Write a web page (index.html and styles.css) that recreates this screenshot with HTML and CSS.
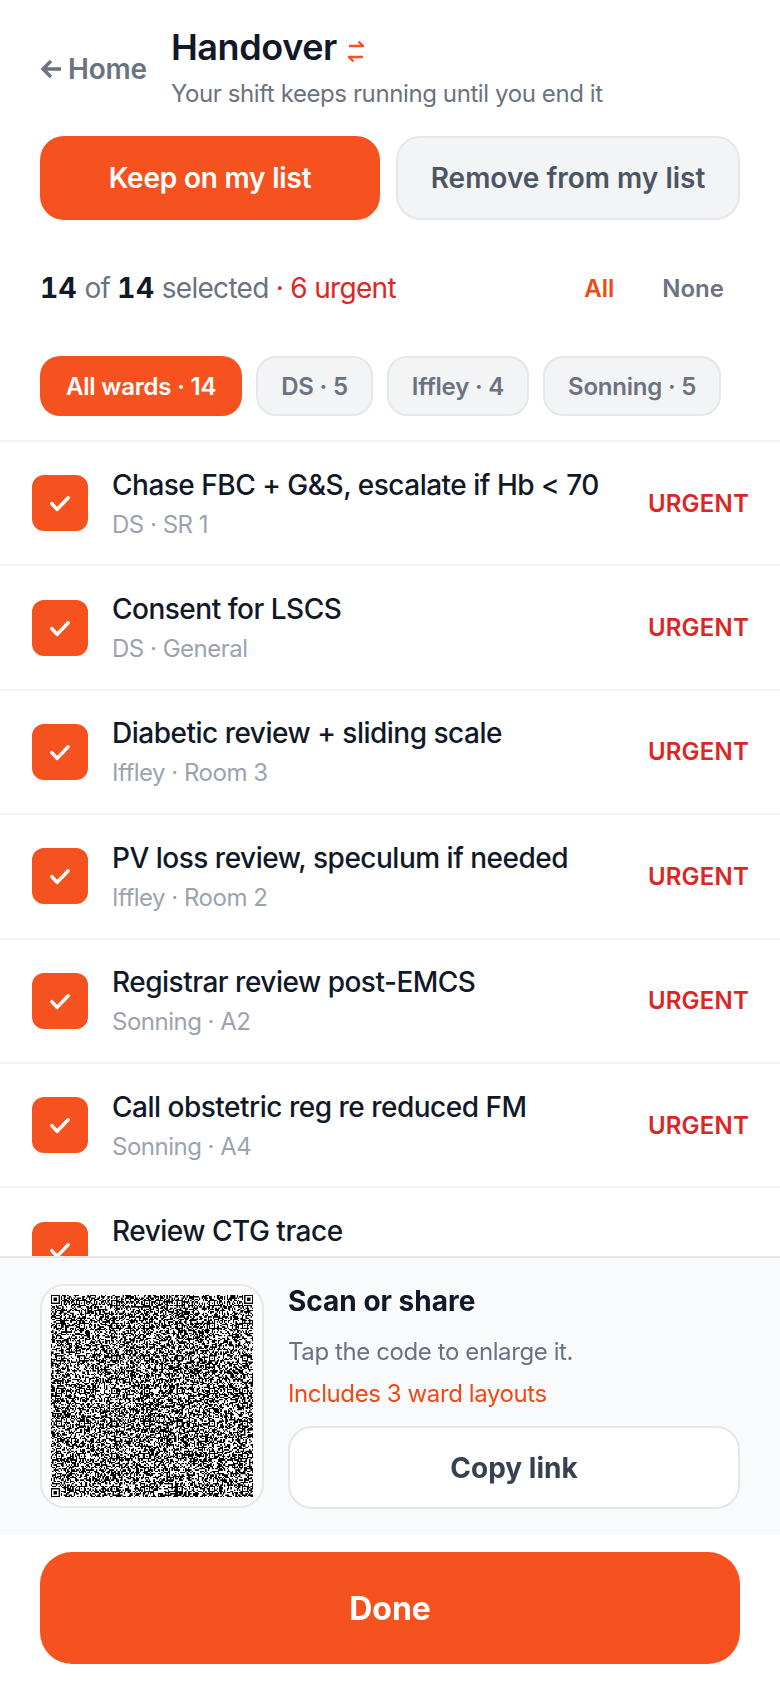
FILE: index.html
```html
<!DOCTYPE html>
<html lang="en">

<head>
    <meta charset="UTF-8">
    <meta name="viewport" content="width=device-width, initial-scale=1.0">
    <title>Handover</title>
    <link rel="stylesheet" href="styles.css">
</head>

<body>
    <div class="app">
        <header class="top">
            <a class="back" href="#">
                <svg width="21" height="20" viewBox="0 0 21 20" fill="none" stroke="#6b7280" stroke-width="3.4">
                    <path d="M21 10H3M11 2l-8 8 8 8" />
                </svg>
                Home
            </a>
            <div class="top-text">
                <h1>Handover
                    <svg class="swap" width="16" height="28" viewBox="0 0 16 28" fill="none" stroke="#f6521f" stroke-width="2.4">
                        <path d="M1 10h14l-4.5-4.5" />
                        <path d="M15 21H1l4.500 4.500" />
                    </svg>
                </h1>
                <p>Your shift keeps running until you end it</p>
            </div>
        </header>

        <div class="mode">
            <button class="btn btn-primary">Keep on my list</button>
            <button class="btn btn-grey">Remove from my list</button>
        </div>

        <div class="summary">
            <p><b>14</b> of <b>14</b> selected <span class="urgent-count">&middot; 6 urgent</span></p>
            <div class="summary-links">
                <a class="link-all" href="#">All</a>
                <a class="link-none" href="#">None</a>
            </div>
        </div>

        <div class="chips">
            <button class="chip chip-on">All wards &middot; 14</button>
            <button class="chip">DS &middot; 5</button>
            <button class="chip">Iffley &middot; 4</button>
            <button class="chip">Sonning &middot; 5</button>
        </div>

        <ul class="tasks">
            <li class="task">
                <span class="check"><svg width="28" height="28" viewBox="0 0 24 24" fill="none" stroke="#fff" stroke-width="3" stroke-linecap="round" stroke-linejoin="round"><path d="M5 12.500l4.500 5 9.500-10" /></svg></span>
                <div class="task-text"><h2>Chase FBC + G&amp;S, escalate if Hb &lt; 70</h2><p>DS &middot; SR 1</p></div>
                <span class="tag">URGENT</span>
            </li>
            <li class="task">
                <span class="check"><svg width="28" height="28" viewBox="0 0 24 24" fill="none" stroke="#fff" stroke-width="3" stroke-linecap="round" stroke-linejoin="round"><path d="M5 12.500l4.500 5 9.500-10" /></svg></span>
                <div class="task-text"><h2>Consent for LSCS</h2><p>DS &middot; General</p></div>
                <span class="tag">URGENT</span>
            </li>
            <li class="task">
                <span class="check"><svg width="28" height="28" viewBox="0 0 24 24" fill="none" stroke="#fff" stroke-width="3" stroke-linecap="round" stroke-linejoin="round"><path d="M5 12.500l4.500 5 9.500-10" /></svg></span>
                <div class="task-text"><h2>Diabetic review + sliding scale</h2><p>Iffley &middot; Room 3</p></div>
                <span class="tag">URGENT</span>
            </li>
            <li class="task">
                <span class="check"><svg width="28" height="28" viewBox="0 0 24 24" fill="none" stroke="#fff" stroke-width="3" stroke-linecap="round" stroke-linejoin="round"><path d="M5 12.500l4.500 5 9.500-10" /></svg></span>
                <div class="task-text"><h2>PV loss review, speculum if needed</h2><p>Iffley &middot; Room 2</p></div>
                <span class="tag">URGENT</span>
            </li>
            <li class="task">
                <span class="check"><svg width="28" height="28" viewBox="0 0 24 24" fill="none" stroke="#fff" stroke-width="3" stroke-linecap="round" stroke-linejoin="round"><path d="M5 12.500l4.500 5 9.500-10" /></svg></span>
                <div class="task-text"><h2>Registrar review post-EMCS</h2><p>Sonning &middot; A2</p></div>
                <span class="tag">URGENT</span>
            </li>
            <li class="task">
                <span class="check"><svg width="28" height="28" viewBox="0 0 24 24" fill="none" stroke="#fff" stroke-width="3" stroke-linecap="round" stroke-linejoin="round"><path d="M5 12.500l4.500 5 9.500-10" /></svg></span>
                <div class="task-text"><h2>Call obstetric reg re reduced FM</h2><p>Sonning &middot; A4</p></div>
                <span class="tag">URGENT</span>
            </li>
            <li class="task">
                <span class="check"><svg width="28" height="28" viewBox="0 0 24 24" fill="none" stroke="#fff" stroke-width="3" stroke-linecap="round" stroke-linejoin="round"><path d="M5 12.500l4.500 5 9.500-10" /></svg></span>
                <div class="task-text"><h2>Review CTG trace</h2><p>&nbsp;</p></div>
            </li>
        </ul>

        <section class="share">
            <div class="qr-box"><canvas id="qr" class="qr" width="644" height="644"></canvas></div>
            <div class="share-text">
                <h3>Scan or share</h3>
                <p class="share-hint">Tap the code to enlarge it.</p>
                <p class="share-note">Includes 3 ward layouts</p>
                <button class="btn-copy">Copy link</button>
            </div>
        </section>

        <footer class="bottom">
            <button class="btn-done">Done</button>
        </footer>
    </div>

    <script src="qr.js"></script>
</body>

</html>
```

FILE: styles.css
```css
/* Page shell */
* {
    box-sizing: border-box;
}

body {
    margin: 0;
    background-color: white;
    font-family: Inter, 'Noto Sans', sans-serif;
    color: #111827;
}

.app {
    height: 1688px;
    display: flex;
    flex-direction: column;
    overflow: hidden;
}

button {
    font-family: inherit;
    cursor: pointer;
}

a {
    text-decoration: none;
}

/* Header */
.top {
    display: flex;
    align-items: center;
    gap: 24px;
    padding: 23px 40px 0;
}

.back {
    display: flex;
    align-items: center;
    gap: 7px;
    padding-top: 4px;
    font-size: 28px;
    font-weight: 600;
    letter-spacing: -0.2px;
    color: #6b7280;
}

h1 {
    display: flex;
    align-items: center;
    gap: 11px;
    margin: 0;
    font-size: 36px;
    line-height: 48px;
    font-weight: 600;
    letter-spacing: -0.4px;
}

.swap {
    margin-top: 6px;
}

.top-text p {
    margin: 7px 0 0;
    font-size: 24px;
    line-height: 32px;
    letter-spacing: -0.4px;
    color: #6b7280;
}

/* Keep / remove buttons */
.mode {
    display: flex;
    gap: 16px;
    padding: 26px 40px 0;
}

.btn {
    flex: 1 1 0;
    height: 84px;
    border-radius: 24px;
    font-size: 28px;
    font-weight: 600;
}

.btn-primary {
    background-color: #f6521f;
    border: none;
    color: white;
    letter-spacing: -0.2px;
}

.btn-grey {
    background-color: #f3f4f6;
    border: 2px solid #e5e7eb;
    color: #4b5563;
}

/* Selection summary */
.summary {
    display: flex;
    justify-content: space-between;
    align-items: center;
    padding: 50px 40px 0;
}

.summary p {
    margin: 0;
    font-size: 28px;
    line-height: 36px;
    letter-spacing: -0.7px;
    color: #6b7280;
}

.summary b {
    font-weight: 700;
    font-variant-numeric: tabular-nums;
    letter-spacing: 0.5px;
    color: #111827;
}

.urgent-count {
    color: #dc2626;
}

.summary-links {
    display: flex;
    gap: 48px;
    padding-right: 16px;
    font-size: 24px;
    font-weight: 600;
}

.link-all {
    color: #f04a14;
}

.link-none {
    color: #6b7280;
}

/* Ward filter */
.chips {
    display: flex;
    gap: 14px;
    padding: 50px 40px 24px;
}

.chip {
    height: 60px;
    padding: 0 23px;
    border: 2px solid #e5e7eb;
    border-radius: 20px;
    background-color: #f3f4f6;
    color: #6b7280;
    font-size: 24px;
    font-weight: 600;
    letter-spacing: -0.2px;
}

.chip-on {
    background-color: #f6521f;
    border: none;
    padding: 0 26px;
    color: white;
}

/* Task list */
.tasks {
    flex: 1;
    min-height: 0;
    margin: 0;
    padding: 0;
    list-style: none;
    overflow: hidden;
    border-top: 2px solid #f3f4f6;
}

.task {
    display: flex;
    align-items: center;
    gap: 24px;
    padding: 0 31px 0 32px;
    height: 124.4px;
    border-bottom: 2px solid #f3f4f6;
}

.check {
    flex: none;
    width: 56px;
    height: 56px;
    display: flex;
    align-items: center;
    justify-content: center;
    border-radius: 12px;
    background-color: #f6521f;
}

.task-text {
    flex: 1;
    min-width: 0;
}

.task-text h2 {
    margin: 0;
    font-size: 28px;
    line-height: 38px;
    font-weight: 500;
    letter-spacing: -0.5px;
    color: #111827;
}

.task-text p {
    margin: 5px 0 0;
    font-size: 24px;
    line-height: 32px;
    letter-spacing: -0.5px;
    color: #9ca3af;
}

.tag {
    font-size: 24px;
    font-weight: 600;
    letter-spacing: 0.2px;
    color: #dc2626;
}

/* Scan or share panel */
.share {
    display: flex;
    gap: 24px;
    height: 279px;
    padding: 26px 40px 0;
    background-color: #f9fafb;
    border-top: 2px solid #e5e7eb;
}

.qr-box {
    flex: none;
    width: 224px;
    height: 224px;
    display: flex;
    align-items: center;
    justify-content: center;
    background-color: white;
    border: 2px solid #e5e7eb;
    border-radius: 24px;
}

.qr {
    width: 202px;
    height: 202px;
}

.share-text {
    flex: 1;
}

.share-text h3 {
    margin: 0;
    font-size: 28px;
    line-height: 34px;
    font-weight: 700;
}

.share-text p {
    margin: 0;
    font-size: 24px;
    line-height: 32px;
    letter-spacing: -0.4px;
}

.share-text .share-hint {
    margin-top: 18px;
    color: #6b7280;
}

.share-text .share-note {
    margin-top: 10px;
    color: #f04a14;
}

.btn-copy {
    width: 100%;
    height: 83px;
    margin-top: 16px;
    background-color: white;
    border: 2px solid #e5e7eb;
    border-radius: 24px;
    font-size: 28px;
    font-weight: 700;
    color: #374151;
}

/* Done bar */
.bottom {
    padding: 17px 40px 24px;
    background-color: white;
}

.btn-done {
    width: 100%;
    height: 112px;
    background-color: #f6521f;
    border: none;
    border-radius: 32px;
    color: white;
    font-size: 32px;
    font-weight: 700;
}
```

FILE: qr.js
```js
// Draws the share code: finder, alignment and timing marks over seeded noise
const canvas = document.getElementById('qr');
const ctx = canvas.getContext('2d');
const size = 161;
const centres = [6, 24, 50, 76, 102, 128, 154];
let seed = 20240611;

ctx.scale(canvas.width / size, canvas.height / size);

function next() {
    seed = (seed * 1664525 + 1013904223) >>> 0;
    return (seed >>> 16) / 65536;
}

function box(x, y, w, colour) {
    ctx.fillStyle = colour;
    ctx.fillRect(x, y, w, w);
}

ctx.fillStyle = '#fff';
ctx.fillRect(0, 0, size, size);
for (let y = 0; y < size; y++) {
    for (let x = 0; x < size; x++) {
        if (next() < 0.5) box(x, y, 1, '#000');
    }
}

// Timing lines
for (let i = 8; i < size - 8; i++) {
    const colour = i % 2 === 0 ? '#000' : '#fff';
    box(i, 6, 1, colour);
    box(6, i, 1, colour);
}

// Alignment squares
centres.forEach(cy => {
    centres.forEach(cx => {
        const nearFinder = (cx < 10 && cy < 10) || (cx > 150 && cy < 10) || (cx < 10 && cy > 150);
        if (nearFinder) return;
        box(cx - 2, cy - 2, 5, '#000');
        box(cx - 1, cy - 1, 3, '#fff');
        box(cx, cy, 1, '#000');
    });
});

// Finder squares with their quiet edge
[[0, 0], [size - 7, 0], [0, size - 7]].forEach(([x, y]) => {
    box(x - 1, y - 1, 9, '#fff');
    box(x, y, 7, '#000');
    box(x + 1, y + 1, 5, '#fff');
    box(x + 2, y + 2, 3, '#000');
});
```
